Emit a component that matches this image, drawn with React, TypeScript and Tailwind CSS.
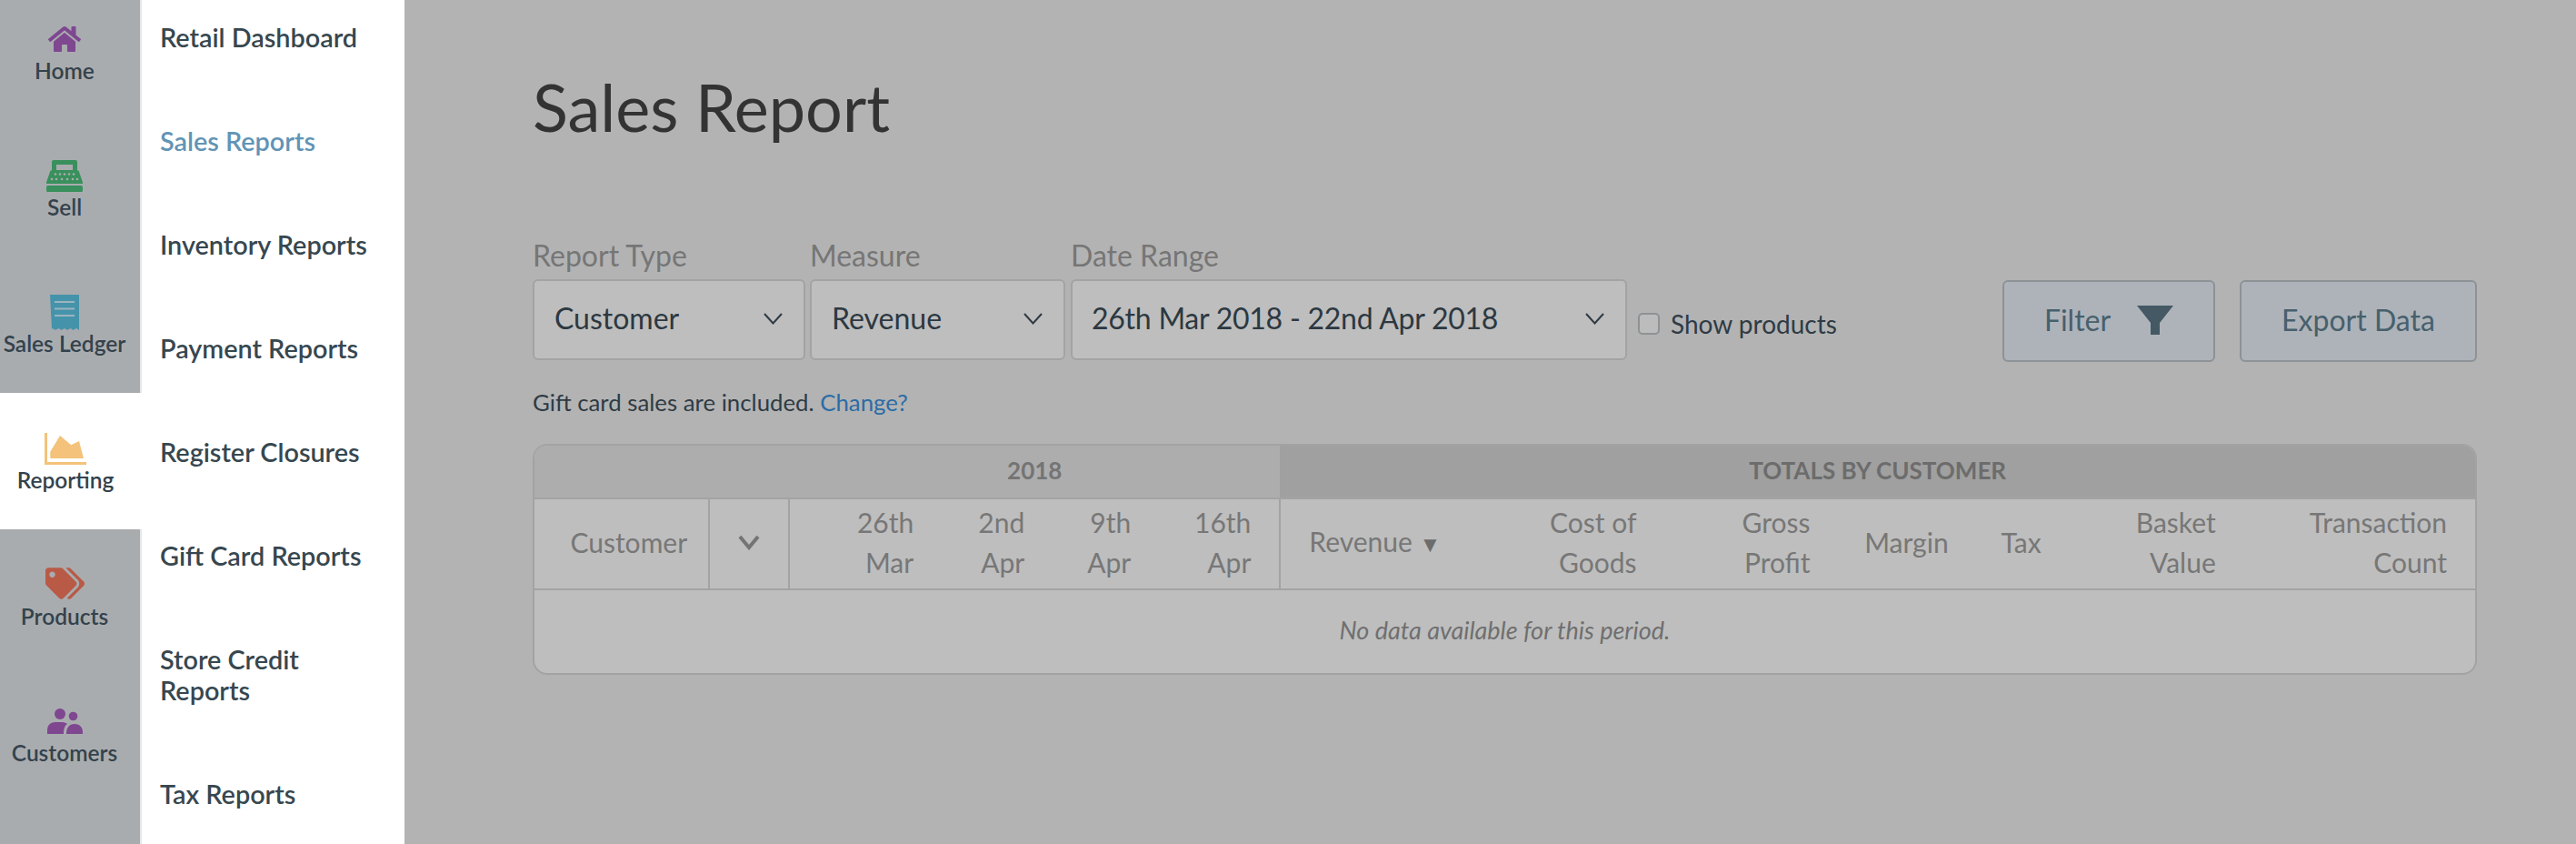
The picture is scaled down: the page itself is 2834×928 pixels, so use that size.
import React from 'react';
import { FaHome, FaTags } from 'react-icons/fa';

const RegisterIcon = () => (
    <svg width="40" height="35" viewBox="0 0 40 35" fill="#39905c">
        <path fillRule="evenodd" d="M8 0h24a2 2 0 0 1 2 2v9.5h1.5L40 24.5V26H0v-1.5L4.5 11.5H6V2a2 2 0 0 1 2-2zm3 5v6h18V5z" />
        <rect x="0" y="28" width="40" height="7" rx="1.5" />
        <g fill="#a9acaf">
            {[10, 15, 20, 25, 30].map((x) => (
                <circle key={x} cx={x} cy="15.5" r="1.3" />
            ))}
            {[6, 11, 17, 23, 29, 34].map((x) => (
                <circle key={x} cx={x} cy="21" r="1.3" />
            ))}
        </g>
    </svg>
);

const ReceiptIcon = () => (
    <svg width="32" height="39" viewBox="0 0 32 39" fill="#4593ab">
        <path d="M0 0h32v39l-3-2-3.5 2-3-2-3.5 2-3-2-3.5 2-3-2-3.5 2-3-2-1 1z" />
        <g fill="#9cb4bf">
            <rect x="5" y="7" width="22" height="2" />
            <rect x="5" y="14.5" width="22" height="2" />
            <rect x="5" y="22" width="22" height="2" />
        </g>
    </svg>
);

const AreaIcon = () => (
    <svg width="46" height="35" viewBox="0 0 46 35" fill="#f4c27a">
        <rect x="0" y="0" width="3" height="35" />
        <rect x="0" y="32" width="46" height="3" />
        <path d="M6.3 28V20.7L17 3l12.3 10.3L38 9l5 19z" />
    </svg>
);

const PeopleIcon = () => (
    <svg width="39" height="28" viewBox="0 0 39 28" fill="#7e4790">
        <circle cx="14" cy="6" r="6" />
        <circle cx="28.5" cy="8.5" r="4.8" />
        <path d="M0 28v-4c0-6 4-9 9-9h7c3 0 5 1 6 2-3 2-4 6-4 11z" />
        <path d="M21 28c0-7 3-11 9-11s9 4 9 9v2z" />
    </svg>
);

const FunnelIcon = () => (
    <svg width="40" height="32" viewBox="0 0 40 32" fill="#445964">
        <path d="M0 0h40L25 19v13H15V19z" />
    </svg>
);

const Chevron = () => (
    <svg width="21" height="13" viewBox="0 0 21 13" fill="none" stroke="#2f3a42" strokeWidth="2">
        <path d="M1 1l9.5 10.5L20 1" />
    </svg>
);

const railItems = [
    { label: 'Home', icon: <FaHome size={36} color="#7e4790" />, iconBox: 'pb-[2px]' },
    { label: 'Sell', icon: <RegisterIcon />, iconBox: 'pb-[2px]' },
    { label: 'Sales Ledger', icon: <ReceiptIcon />, iconBox: 'pb-0' },
    { label: 'Reporting', icon: <AreaIcon />, iconBox: 'pb-[2px]', active: true },
    { label: 'Products', icon: <FaTags size={43} color="#b85a46" />, iconBox: 'pb-0' },
    { label: 'Customers', icon: <PeopleIcon />, iconBox: 'pb-[6px]' },
];

const subItems = [
    'Retail Dashboard',
    'Sales Reports',
    'Inventory Reports',
    'Payment Reports',
    'Register Closures',
    'Gift Card Reports',
    'Store Credit Reports',
    'Tax Reports',
];

const SelectBox = ({ label, value, className, valueClass = '' }: { label: string; value: string; className: string; valueClass?: string }) => (
    <div className={className}>
        <div className="text-[32px] leading-[36px] text-[#767676] mb-[8px]">{label}</div>
        <div className="h-[89px] flex items-center justify-between pl-[22px] pr-[23px] pb-[3px] bg-[#bebebe] border-2 border-[#a3a3a3] rounded-[6px] text-[32px] text-[#2c3841]">
            <span className={valueClass}>{value}</span>
            <Chevron />
        </div>
    </div>
);

const dateCols = [
    ['26th', 'Mar'],
    ['2nd', 'Apr'],
    ['9th', 'Apr'],
    ['16th', 'Apr'],
];

const totalCols = [
    ['Cost of', 'Goods'],
    ['Gross', 'Profit'],
    ['Margin', ''],
    ['Tax', ''],
    ['Basket', 'Value'],
    ['Transaction', 'Count'],
];

const App = () => {
    return (
        <div className="flex h-[928px] overflow-hidden bg-[#b3b3b3] font-['Lato',sans-serif]">
            {/* Main rail */}
            <div className="w-[156px] shrink-0 -mt-[18px] bg-[#a9acaf] border-r-2 border-[#e4e8eb]">
                {railItems.map((item) => (
                    <div
                        key={item.label}
                        className={`h-[150px] pr-[12px] text-center text-[24.5px] leading-[30px] font-semibold text-[#34424c] whitespace-nowrap ${item.active ? 'bg-white -mr-[2px]' : ''}`}
                    >
                        <div className={`h-[81px] flex items-end justify-center ${item.iconBox}`}>{item.icon}</div>
                        {item.label}
                    </div>
                ))}
            </div>

            {/* Sub nav */}
            <div className="w-[289px] shrink-0 bg-white pl-[20px] pr-[16px] pt-[24px]">
                {subItems.map((item) => (
                    <div
                        key={item}
                        className={`mb-[80px] text-[28.8px] leading-[34px] font-semibold ${item === 'Sales Reports' ? 'text-[#6194b5]' : 'text-[#37474f]'}`}
                    >
                        {item}
                    </div>
                ))}
            </div>

            {/* Report */}
            <div className="flex-1 pl-[141px] pr-[109px] pt-[72px]">
                <h1 className="text-[72px] leading-[90px] text-[#333333]">Sales Report</h1>

                <div className="flex items-start mt-[101px]">
                    <SelectBox label="Report Type" value="Customer" className="w-[300px] mr-[5px]" />
                    <SelectBox label="Measure" value="Revenue" className="w-[281px] mr-[6px]" />
                    <SelectBox label="Date Range" value="26th Mar 2018 - 22nd Apr 2018" className="w-[612px]" valueClass="-ml-[1px] tracking-[-0.25px]" />
                    <label className="flex items-center mt-[72px] ml-[12px] text-[28px] text-[#2f3b44]">
                        <span className="w-[24px] h-[24px] mr-[12px] rounded-[5px] border-2 border-[#8f9294] bg-[#bcbcbc]" />
                        Show products
                    </label>
                    <div className="ml-auto flex mt-[45px] gap-[27px]">
                        <button className="w-[234px] h-[90px] flex items-center justify-center gap-[29px] pb-[2px] bg-[#aeb3ba] border-2 border-[#8d9296] rounded-[6px] text-[32px] text-[#47606c]">
                            Filter
                            <FunnelIcon />
                        </button>
                        <button className="w-[261px] h-[90px] pb-[2px] bg-[#aeb3ba] border-2 border-[#8d9296] rounded-[6px] text-[32px] text-[#47606c]">
                            Export Data
                        </button>
                    </div>
                </div>

                <p className="mt-[25px] text-[25.8px] leading-[38px] text-[#2f3b44]">
                    Gift card sales are included. <span className="text-[#2b6ca6]">Change?</span>
                </p>

                <div className="mt-[27px] rounded-[16px] border-2 border-[#a3a3a3] overflow-hidden bg-[#bebebe]">
                    <table className="w-full table-fixed text-[30px] leading-[44px] text-[#777777]">
                        <colgroup>
                            <col className="w-[192px]" />
                            <col className="w-[88px]" />
                            <col className="w-[168px]" />
                            <col className="w-[122px]" />
                            <col className="w-[117px]" />
                            <col className="w-[133px]" />
                            <col className="w-[210px]" />
                            <col className="w-[213px]" />
                            <col className="w-[191px]" />
                            <col className="w-[152px]" />
                            <col className="w-[102px]" />
                            <col className="w-[192px]" />
                            <col className="w-[254px]" />
                        </colgroup>
                        <thead>
                            <tr className="h-[58px] text-[26px]">
                                <th colSpan={2} className="bg-[#adadad]" />
                                <th colSpan={4} className="pb-[4px] bg-[#adadad] font-bold text-[#747474]">
                                    2018
                                </th>
                                <th colSpan={7} className="pb-[4px] bg-[#a0a0a0] font-bold text-[#6c6c6c]">
                                    TOTALS BY CUSTOMER
                                </th>
                            </tr>
                            <tr className="h-[100px] border-y-2 border-[#a3a3a3]">
                                <th className="pr-[23px] pb-[4px] text-right font-normal border-r-2 border-[#a3a3a3]">Customer</th>
                                <th className="pb-[4px] font-normal border-r-2 border-[#a3a3a3]">
                                    <svg width="24" height="17" viewBox="0 0 24 17" fill="none" stroke="#747474" strokeWidth="4" className="mx-auto">
                                        <path d="M2 2l10 12L22 2" />
                                    </svg>
                                </th>
                                {dateCols.map(([a, b], i) => (
                                    <th key={a + b} className={`pr-[31px] pb-[4px] text-right font-normal ${i === 3 ? 'border-r-2 border-[#a3a3a3]' : ''}`}>
                                        {a}
                                        <br />
                                        {b}
                                    </th>
                                ))}
                                <th className="pl-[31px] pb-[4px] text-left font-normal whitespace-nowrap">
                                    Revenue <span className="text-[24px] text-[#6c6c6c]">▼</span>
                                </th>
                                {totalCols.map(([a, b]) => (
                                    <th key={a} className="pr-[31px] pb-[4px] text-right font-normal">
                                        {a}
                                        {b && <br />}
                                        {b}
                                    </th>
                                ))}
                            </tr>
                        </thead>
                        <tbody>
                            <tr>
                                <td colSpan={13} className="h-[92px] pb-[4px] text-center italic text-[27px] text-[#6f6f6f]">
                                    No data available for this period.
                                </td>
                            </tr>
                        </tbody>
                    </table>
                </div>
            </div>
        </div>
    );
};

export default App;
